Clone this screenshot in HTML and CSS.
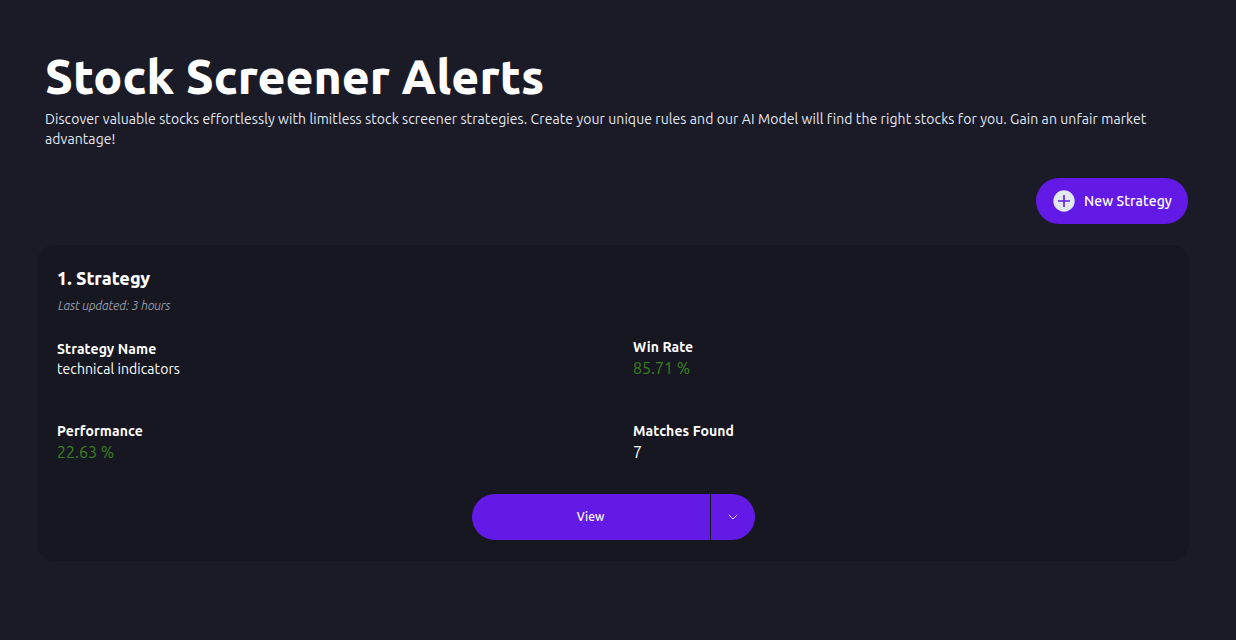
FILE: index.html
```html
<!DOCTYPE html>
<html lang="en">

<head>
    <meta charset="UTF-8">
    <meta name="viewport" content="width=device-width, initial-scale=1.0">
    <title>Stock Screener Alerts</title>
    <link rel="stylesheet" href="styles.css">
</head>

<body>
    <main class="container">
        <header class="intro">
            <h1>Stock Screener Alerts</h1>
            <p>Discover valuable stocks effortlessly with limitless stock screener strategies. Create your unique rules and our AI Model will find the right stocks for you. Gain an unfair market advantage!</p>
        </header>

        <div class="toolbar">
            <button type="button" class="btn new-btn">
                <svg width="22" height="22" viewBox="0 0 22 22">
                    <circle cx="11" cy="11" r="10.7" fill="#e2e8f0" />
                    <path d="M11 5v12M5 11h12" stroke="#641ae6" stroke-width="1.6" />
                </svg>
                <span>New Strategy</span>
            </button>
        </div>

        <section class="card">
            <h2>1. Strategy</h2>
            <p class="updated">Last updated: 3 hours</p>

            <div class="stats">
                <div class="stat name">
                    <h3>Strategy Name</h3>
                    <p>technical indicators</p>
                </div>
                <div class="stat">
                    <h3>Win Rate</h3>
                    <p class="big green">85.71 %</p>
                </div>
                <div class="stat">
                    <h3>Performance</h3>
                    <p class="big green">22.63 %</p>
                </div>
                <div class="stat">
                    <h3>Matches Found</h3>
                    <p class="big">7</p>
                </div>
            </div>

            <div class="actions">
                <button type="button" class="btn view-btn">View</button>
                <button type="button" class="btn more-btn" aria-label="More">
                    <svg width="10" height="6" viewBox="0 0 10 6">
                        <path d="M.8 .8l4.2 4.2 4.2-4.2" fill="none" stroke="#e2d8fb" stroke-width="1" />
                    </svg>
                </button>
            </div>
        </section>
    </main>
</body>

</html>
```
FILE: styles.css
```css
* {
    margin: 0;
    padding: 0;
    box-sizing: border-box;
}

body {
    font-family: Ubuntu, "Noto Sans", sans-serif;
    background-color: #1b1b27;
    color: #fff;
    height: 100vh;
    overflow: hidden;
}

.container {
    width: 1152px;
    margin-left: 37px;
    padding-top: 52px;
}

/* Heading */
.intro {
    padding-left: 8px;
    height: 126px;
}

h1 {
    font-size: 48px;
    line-height: 48px;
    font-weight: 800;
    white-space: nowrap;
    margin-bottom: 9px;
}

.intro p {
    font-size: 14px;
    line-height: 20px;
    letter-spacing: 0.084px;
    color: #e2e8f0;
}

/* Buttons */
.btn {
    border: none;
    background-color: #641ae6;
    color: #fff;
    font-family: inherit;
    font-weight: 500;
    display: flex;
    align-items: center;
    justify-content: center;
    cursor: pointer;
}

.toolbar {
    display: flex;
    justify-content: flex-end;
    padding-right: 1px;
    margin-bottom: 21px;
}

.new-btn {
    width: 152px;
    height: 46px;
    border-radius: 23px;
    font-size: 14px;
    letter-spacing: 0.08px;
    justify-content: flex-start;
    padding-left: 17px;
    gap: 9px;
    white-space: nowrap;
}

/* Strategy card */
.card {
    height: 316px;
    padding: 19px 20px 20px;
    background-color: #171722;
    border-radius: 18px;
}

h2 {
    font-size: 18px;
    line-height: 28px;
    font-weight: 800;
}

.updated {
    font-size: 12.5px;
    line-height: 16px;
    letter-spacing: -0.23px;
    margin-top: 5px;
    padding-left: 1px;
    font-style: italic;
    color: #949ba8;
}

.stats {
    display: grid;
    grid-template-columns: 576px 1fr;
    grid-template-rows: 84px 84px;
    margin-top: 23px;
}

.stat {
    padding-top: 1px;
}

.stat.name {
    padding-top: 3px;
}

h3 {
    font-size: 14px;
    line-height: 20px;
    font-weight: 700;
    letter-spacing: 0.09px;
}

.stat p {
    font-size: 14px;
    line-height: 20px;
    letter-spacing: 0.08px;
}

.stat .big {
    font-size: 16px;
    line-height: 22px;
    letter-spacing: 0;
}

.stat .green {
    color: #37811f;
}

.actions {
    display: flex;
    justify-content: center;
    gap: 1px;
    margin-top: -10px;
}

.view-btn {
    width: 238px;
    height: 46px;
    border-radius: 23px 0 0 23px;
    font-size: 12px;
    padding-bottom: 2px;
}

.more-btn {
    width: 44px;
    height: 46px;
    border-radius: 0 23px 23px 0;
}
```
